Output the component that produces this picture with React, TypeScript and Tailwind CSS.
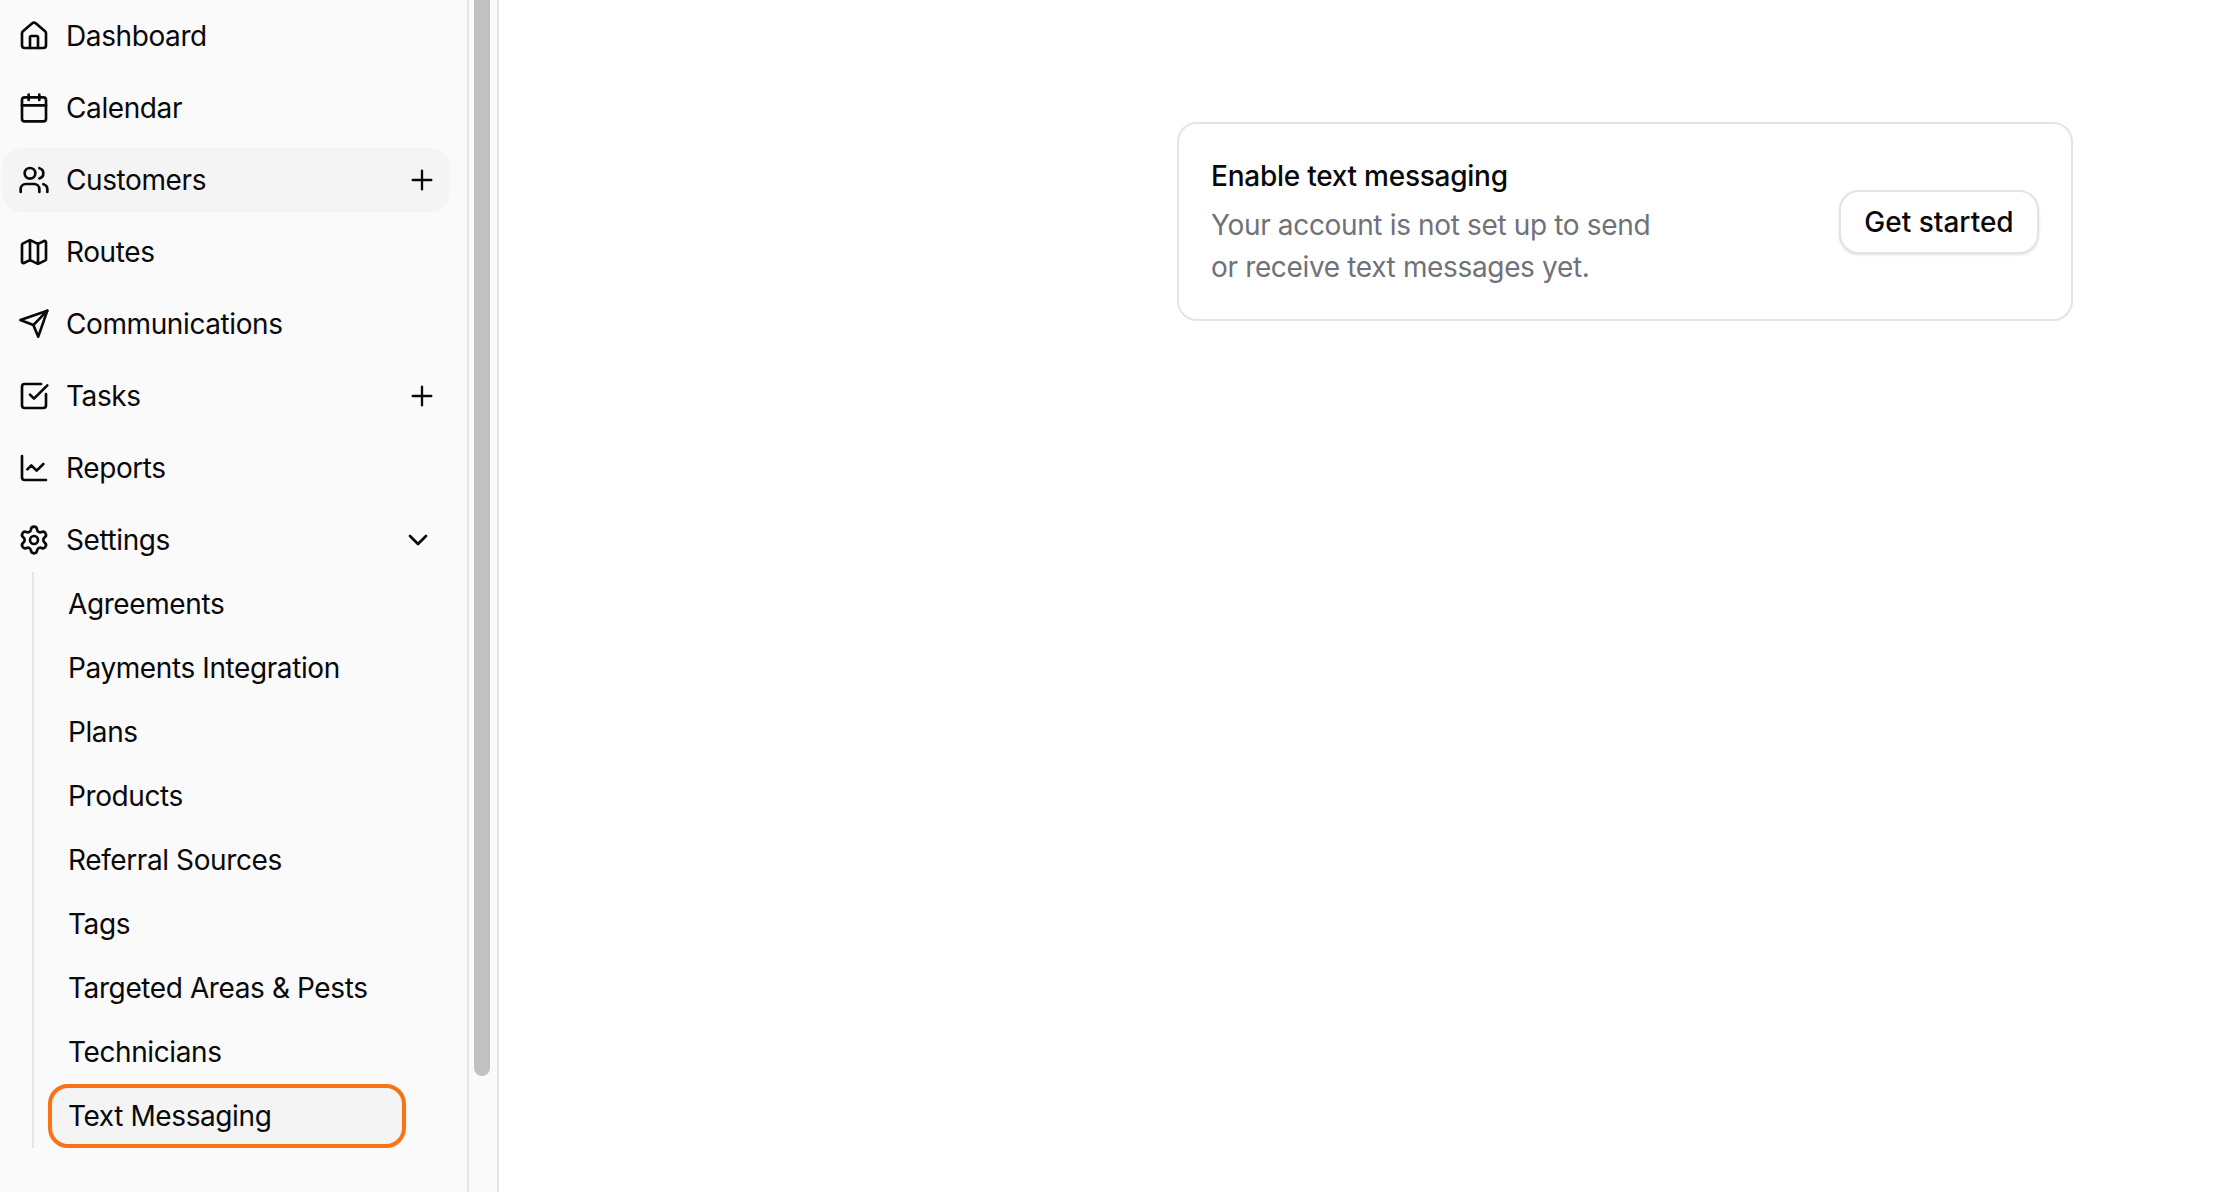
import { Calendar, ChartLine, ChevronDown, House, Map, Plus, Settings, SquareCheckBig, Users } from "lucide-react";

function PlaneIcon() {
  return (
    <svg width="32" height="32" viewBox="0 0 24 24" fill="none" stroke="currentColor" strokeWidth="2" strokeLinecap="round" strokeLinejoin="round">
      <path d="M22 2 1.8 9l9.7 3.8 3.7 8.7z" />
      <path d="M22 2 11.5 12.8" />
    </svg>
  );
}

const mainNav = [
  { label: "Dashboard", icon: <House size={32} /> },
  { label: "Calendar", icon: <Calendar size={32} /> },
  { label: "Customers", icon: <Users size={32} />, plus: true, active: true },
  { label: "Routes", icon: <Map size={32} /> },
  { label: "Communications", icon: <PlaneIcon /> },
  { label: "Tasks", icon: <SquareCheckBig size={32} />, plus: true },
  { label: "Reports", icon: <ChartLine size={32} /> },
];

const settingsNav = [
  "Agreements",
  "Payments Integration",
  "Plans",
  "Products",
  "Referral Sources",
  "Tags",
  "Targeted Areas & Pests",
  "Technicians",
];

export default function App() {
  return (
    <div className="flex h-screen overflow-hidden bg-white text-[28px] tracking-[-0.4px] text-[#09090b] font-['Inter',sans-serif]">
      {/* Sidebar */}
      <aside className="flex w-[499px] shrink-0 border-r-2 border-[#e5e5e5] bg-[#fafafa]">
        <nav className="flex w-[469px] shrink-0 flex-col gap-2 border-r-2 border-[#e5e5e5] pl-0.5 pr-[17px] pt-1">
          {mainNav.map((item) => (
            <a
              key={item.label}
              className={`flex h-16 items-center gap-4 rounded-[20px] pl-4 pr-3 ${item.active ? "bg-[#f4f4f5]" : ""}`}
            >
              {item.icon}
              <span className="flex-1">{item.label}</span>
              {item.plus && <Plus size={32} strokeWidth={1.75} />}
            </a>
          ))}

          <a className="flex h-16 items-center gap-4 rounded-[20px] pl-4 pr-4">
            <Settings size={32} />
            <span className="flex-1">Settings</span>
            <ChevronDown size={32} />
          </a>

          {/* Settings children */}
          <div className="-mt-2 ml-[30px] flex w-[374px] flex-col border-l-2 border-[#e5e5e5] pl-3.5">
            {settingsNav.map((label) => (
              <a key={label} className="flex h-16 items-center rounded-[20px] px-5">
                {label}
              </a>
            ))}
            <a className="flex h-16 items-center rounded-[20px] border-4 border-[#f97316] bg-[#f4f4f5] px-4">
              Text Messaging
            </a>
          </div>
        </nav>

        {/* Scrollbar */}
        <div className="ml-[5px] h-[1076px] w-4 rounded-b-lg bg-[#c1c1c1]" />
      </aside>

      {/* Content */}
      <main className="flex-1 pl-[678px] pt-[122px]">
        <div className="flex h-[199px] w-[896px] items-center justify-between rounded-[20px] border-2 border-[#e4e4e7] bg-white pl-8 pr-8">
          <div>
            <h2 className="text-[28px] font-medium leading-10 tracking-[-0.25px] text-[#09090b]">Enable text messaging</h2>
            <p className="mt-2 w-[470px] leading-[42px] tracking-[-0.35px] text-[#71717a]">
              Your account is not set up to send or receive text messages yet.
            </p>
          </div>
          <button className="h-[64px] w-[200px] rounded-[20px] border-2 border-[#e4e4e7] bg-white font-medium tracking-normal shadow-sm">
            Get started
          </button>
        </div>
      </main>
    </div>
  );
}
